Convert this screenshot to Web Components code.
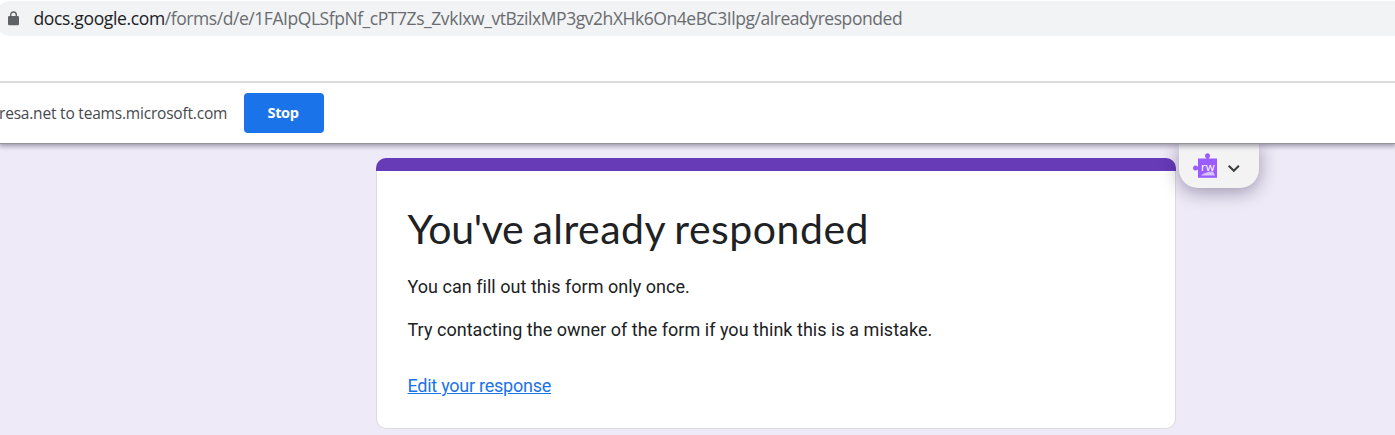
<!DOCTYPE html>
<html lang="en"><head><meta charset="utf-8"><title>Form</title>
<style>
html,body{margin:0;height:100%;overflow:hidden}
body{background:#eeeaf7;color:#202124;font-family:Roboto,"Liberation Sans",sans-serif}
</style></head><body>
<app-page></app-page>
<script>
const define=(name,html)=>customElements.define(name,class extends HTMLElement{
  constructor(){super();const t=document.createElement('template');t.innerHTML=html;this.attachShadow({mode:'open'}).append(t.content.cloneNode(true));}
});
define('address-bar',`<style>
:host{display:flex;align-items:center;height:35px;margin-top:1px;margin-left:-6px;padding-left:13px;box-sizing:border-box;background:#f1f3f4;border-radius:17px 0 0 17px;font:17.5px/24px "Open Sans","Noto Sans",sans-serif;color:#696c70;white-space:nowrap}
svg{display:block;width:12px;height:15px;flex:none;margin-right:14.5px}
span{position:relative;top:-1px}
.host{color:#202124;letter-spacing:-.35px}.path{letter-spacing:-.445px}
</style><svg viewBox="0 0 12 15"><rect x="1" y="5" width="11" height="9.2" rx="1.2" fill="#5f6368"/><path d="M3.7 6V3.8a2.8 2.8 0 0 1 5.6 0V6" fill="none" stroke="#5f6368" stroke-width="1.4"/></svg><span class="host"><slot name="host"></slot></span><span class="path"><slot></slot></span>`);
define('stop-button',`<style>:host{display:block}button{display:block;width:80px;height:40px;border:0;border-radius:4px;padding:0 2px 1px 0;background:#1a73e8;color:#fff;font:700 14.5px/20px "Open Sans","Noto Sans",sans-serif;letter-spacing:-.4px}</style><button><slot></slot></button>`);
define('sharing-bar',`<style>
:host{display:flex;align-items:center;height:62px;box-sizing:border-box;border-top:2px solid #dadce0;background:#fff;white-space:nowrap}
.msg{width:244px;font:15.5px/22px "Open Sans","Noto Sans",sans-serif;color:#46494d;letter-spacing:-.2px;margin-left:-1px;margin-right:1px}
</style><span class="msg"><slot></slot></span><slot name="action"></slot>`);
define('browser-chrome',`<style>:host{display:flex;flex-direction:column;height:143px;background:#fff;position:relative;z-index:3;overflow:visible;box-shadow:0 1px 0 #949398,0 2px 5px 1px rgba(30,25,50,.42)}.gap{flex:1}</style><slot name="address"></slot><div class="gap"></div><slot></slot>`);
define('form-card',`<style>
:host{display:block;width:800px;height:271px;box-sizing:border-box;margin:15px 0 0 376px;border:1px solid #dadce0;border-top:0;border-radius:10px;background:#fff;position:relative}
.band{height:13px;margin:0 -1px;background:#673ab7;border-radius:10px 10px 0 0}
.body{padding:31px 31px 0 30.5px}
h1{margin:0;font:400 41px/54px Lato,sans-serif;letter-spacing:.5px;word-spacing:-1.8px;white-space:nowrap}
p{margin:0;font:18px/24px Roboto,sans-serif;letter-spacing:.03px;white-space:nowrap}
.first{margin-top:19px}.second{margin-top:19px}.last{margin-top:32px;letter-spacing:-.25px}
a{color:#1a73e8}
</style><div class="band"></div><div class="body"><h1><slot name="title"></slot></h1><p class="first"><slot name="reason"></slot></p><p class="second"><slot name="hint"></slot></p><p class="last"><a href="#"><slot name="link"></slot></a></p></div>`);
define('reader-tab',`<style>
:host{position:absolute;left:1179px;top:143px;width:80px;height:45px;background:#f3f3f3;border-radius:0 0 19px 19px;box-shadow:0 4px 18px rgba(30,20,60,.4);z-index:2}
svg{display:block}
</style><svg width="80" height="45" viewBox="0 0 80 45">
<g fill="#9b5cff"><rect x="19" y="15.5" width="19" height="19.3"/><circle cx="28.5" cy="12.7" r="2.5"/><rect x="27.2" y="13" width="2.6" height="4"/><circle cx="16.5" cy="25" r="2.5"/><rect x="17" y="23.8" width="4" height="2.5"/></g>
<path d="M22 32.4q4-3.7 12-4l2 4z" fill="#d9c4ff"/>
<text x="22" y="27.8" font-family="Open Sans" font-size="11.5" font-weight="500" fill="#fff">rw</text>
<path d="M49.7 22.8l5.1 5 5.1-5" fill="none" stroke="#3c4043" stroke-width="2.1"/></svg>`);
define('app-page',`<style>:host{display:block;position:relative;height:435px;overflow:hidden}.tight{letter-spacing:-.35px}</style>
<browser-chrome><address-bar slot="address"><span slot="host">docs.google.com</span>/forms/d/e/1FAIpQLSfpNf_cPT7Zs_ZvkIxw_vtBzilxMP3gv2hXHk6On4eBC3Ilpg/alreadyresponded</address-bar>
<sharing-bar>resa.net to teams.microsoft.com<stop-button slot="action">Stop</stop-button></sharing-bar></browser-chrome>
<form-card><span slot="title"><span class="tight">You've</span> already responded</span><span slot="reason">You can fill out this form only once.</span><span slot="hint">Try contacting the owner of the form if you think this is a mistake.</span><span slot="link">Edit your response</span></form-card>
<reader-tab></reader-tab>`);
</script></body></html>
